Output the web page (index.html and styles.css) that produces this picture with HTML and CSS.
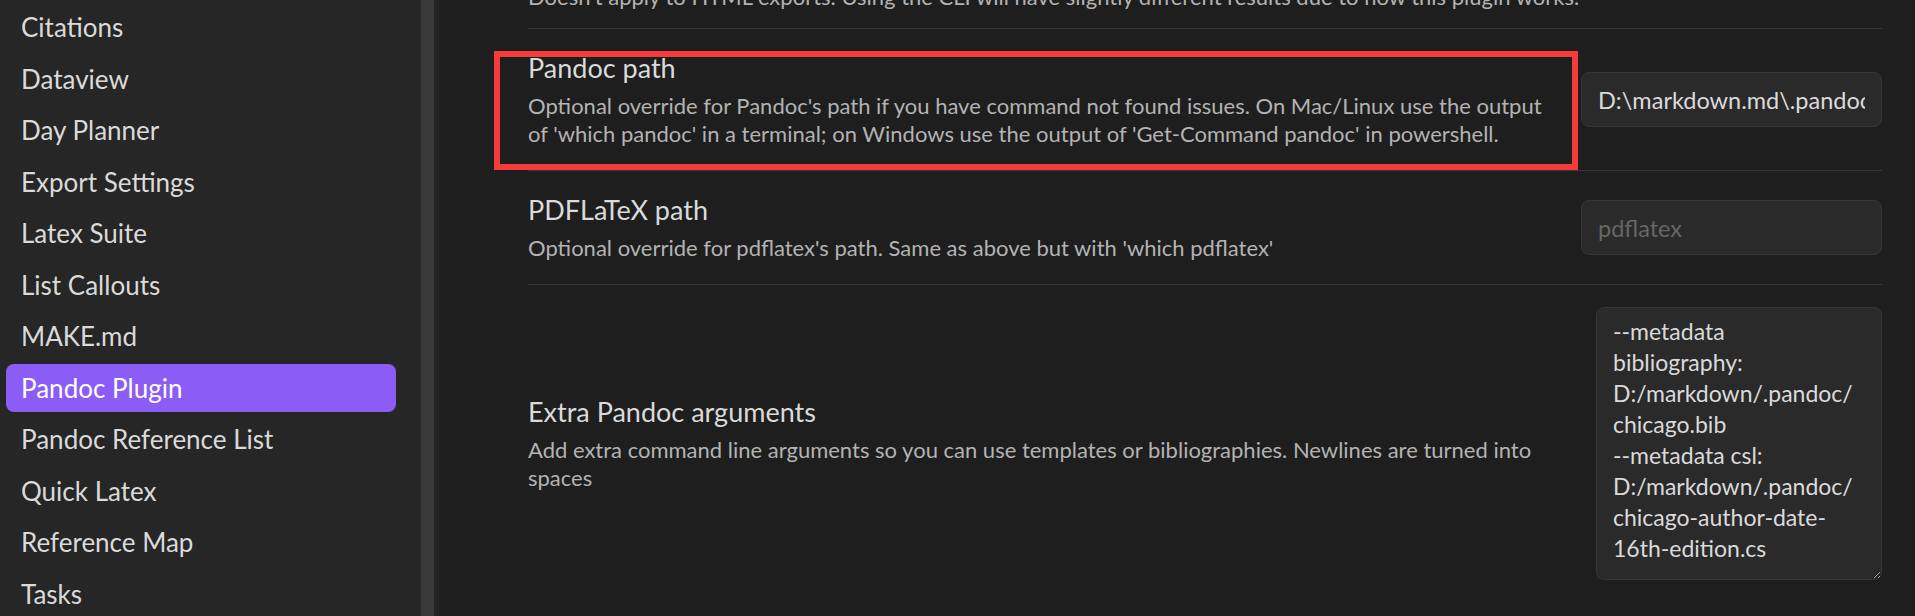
FILE: index.html
```html
<!DOCTYPE html>
<html lang="en">
<head>
    <meta charset="UTF-8">
    <meta name="viewport" content="width=device-width, initial-scale=1.0">
    <title>Pandoc Plugin Settings</title>

    <link rel="stylesheet" href="styles.css">
</head>
<body>
    <div id="app">
        <div class="sidebar">
            <div class="nav-item">Citations</div>
            <div class="nav-item">Dataview</div>
            <div class="nav-item">Day Planner</div>
            <div class="nav-item">Export Settings</div>
            <div class="nav-item">Latex Suite</div>
            <div class="nav-item">List Callouts</div>
            <div class="nav-item">MAKE.md</div>
            <div class="nav-item active">Pandoc Plugin</div>
            <div class="nav-item">Pandoc Reference List</div>
            <div class="nav-item">Quick Latex</div>
            <div class="nav-item">Reference Map</div>
            <div class="nav-item">Tasks</div>
        </div>

        <div class="scrollbar"><div class="thumb"></div></div>

        <div class="content">
            <div class="prev-desc">Doesn't apply to HTML exports. Using the CLI will have slightly different results due to how this plugin works.</div>

            <div class="setting-item">
                <div class="setting-info">
                    <div class="setting-name">Pandoc path</div>
                    <div class="setting-desc">Optional override for Pandoc's path if you have command not found issues. On Mac/Linux use the output of 'which pandoc' in a terminal; on Windows use the output of 'Get-Command pandoc' in powershell.</div>
                </div>
                <div class="setting-control">
                    <input type="text" class="text-input" value="D:\markdown.md\.pandoc\pandoc.exe">
                </div>
            </div>

            <div class="setting-item">
                <div class="setting-info">
                    <div class="setting-name">PDFLaTeX path</div>
                    <div class="setting-desc">Optional override for pdflatex's path. Same as above but with 'which pdflatex'</div>
                </div>
                <div class="setting-control">
                    <input type="text" class="text-input" placeholder="pdflatex">
                </div>
            </div>

            <div class="setting-item">
                <div class="setting-info">
                    <div class="setting-name">Extra Pandoc arguments</div>
                    <div class="setting-desc">Add extra command line arguments so you can use templates or bibliographies. Newlines are turned into spaces</div>
                </div>
                <div class="setting-control">
                    <textarea class="text-area" wrap="off">--metadata
bibliography:
D:/markdown/.pandoc/
chicago.bib
--metadata csl:
D:/markdown/.pandoc/
chicago-author-date-
16th-edition.cs</textarea>
                </div>
            </div>

            <div class="highlight"></div>
        </div>
    </div>
</body>
</html>
```

FILE: styles.css
```css
* {
    margin: 0;
    padding: 0;
    box-sizing: border-box;
}

body {
    height: 616px;
    overflow: hidden;
    background-color: #1e1e1e;
    font-family: Lato, "Segoe UI", "Open Sans", sans-serif;
    color: #dadada;
}

#app {
    display: flex;
    height: 616px;
}

.sidebar {
    width: 421px;
    flex-shrink: 0;
    display: flex;
    flex-direction: column;
    gap: 3.55px;
    padding: 3px 25px 0 6px;
    background-color: #262626;
}

.nav-item {
    height: 48px;
    line-height: 48px;
    padding-left: 15px;
    font-size: 26px;
    color: #dadada;
    border-radius: 8px;
    white-space: nowrap;
}

.nav-item.active {
    background-color: #8b5cf6;
    color: #ffffff;
}

.scrollbar {
    width: 18px;
    flex-shrink: 0;
    background-color: #232323;
}

.thumb {
    width: 13px;
    height: 100%;
    background-color: #393939;
}

.content {
    position: relative;
    flex-grow: 1;
    padding: 0 33px 0 89px;
}

/* tail of the setting above, scrolled mostly out of view */
.prev-desc {
    margin-top: -17px;
    padding-bottom: 17px;
    font-size: 22px;
    line-height: 28px;
    color: #b3b3b3;
    white-space: nowrap;
}

.setting-item {
    display: flex;
    align-items: center;
    padding: 22px 0;
    border-top: 1px solid #363636;
}

.setting-info {
    flex-grow: 1;
    margin-right: 26px;
}

.setting-name {
    font-size: 27px;
    line-height: 34px;
    color: #dadada;
    margin-bottom: 7px;
}

.setting-desc {
    font-size: 22px;
    line-height: 28px;
    color: #b3b3b3;
}

.setting-control {
    flex-shrink: 0;
    display: flex;
    justify-content: flex-end;
    width: 301px;
}

.text-input {
    width: 301px;
    height: 55px;
    padding: 0 16px;
    font-family: inherit;
    font-size: 23.5px;
    color: #dadada;
    background-color: #2a2a2a;
    border: 1px solid #363636;
    border-radius: 8px;
    outline: none;
}

.text-input::placeholder {
    color: #666666;
}

.text-area {
    width: 286px;
    height: 273px;
    padding: 8px 16px;
    font-family: inherit;
    font-size: 23px;
    line-height: 31px;
    color: #dadada;
    background-color: #2a2a2a;
    border: 1px solid #363636;
    border-radius: 8px;
    outline: none;
    overflow: hidden;
    resize: vertical;
    color-scheme: dark;
}

.highlight {
    position: absolute;
    left: 55px;
    top: 51px;
    width: 1084px;
    height: 119px;
    border: 6px solid #f73a3a;
    pointer-events: none;
}
```
